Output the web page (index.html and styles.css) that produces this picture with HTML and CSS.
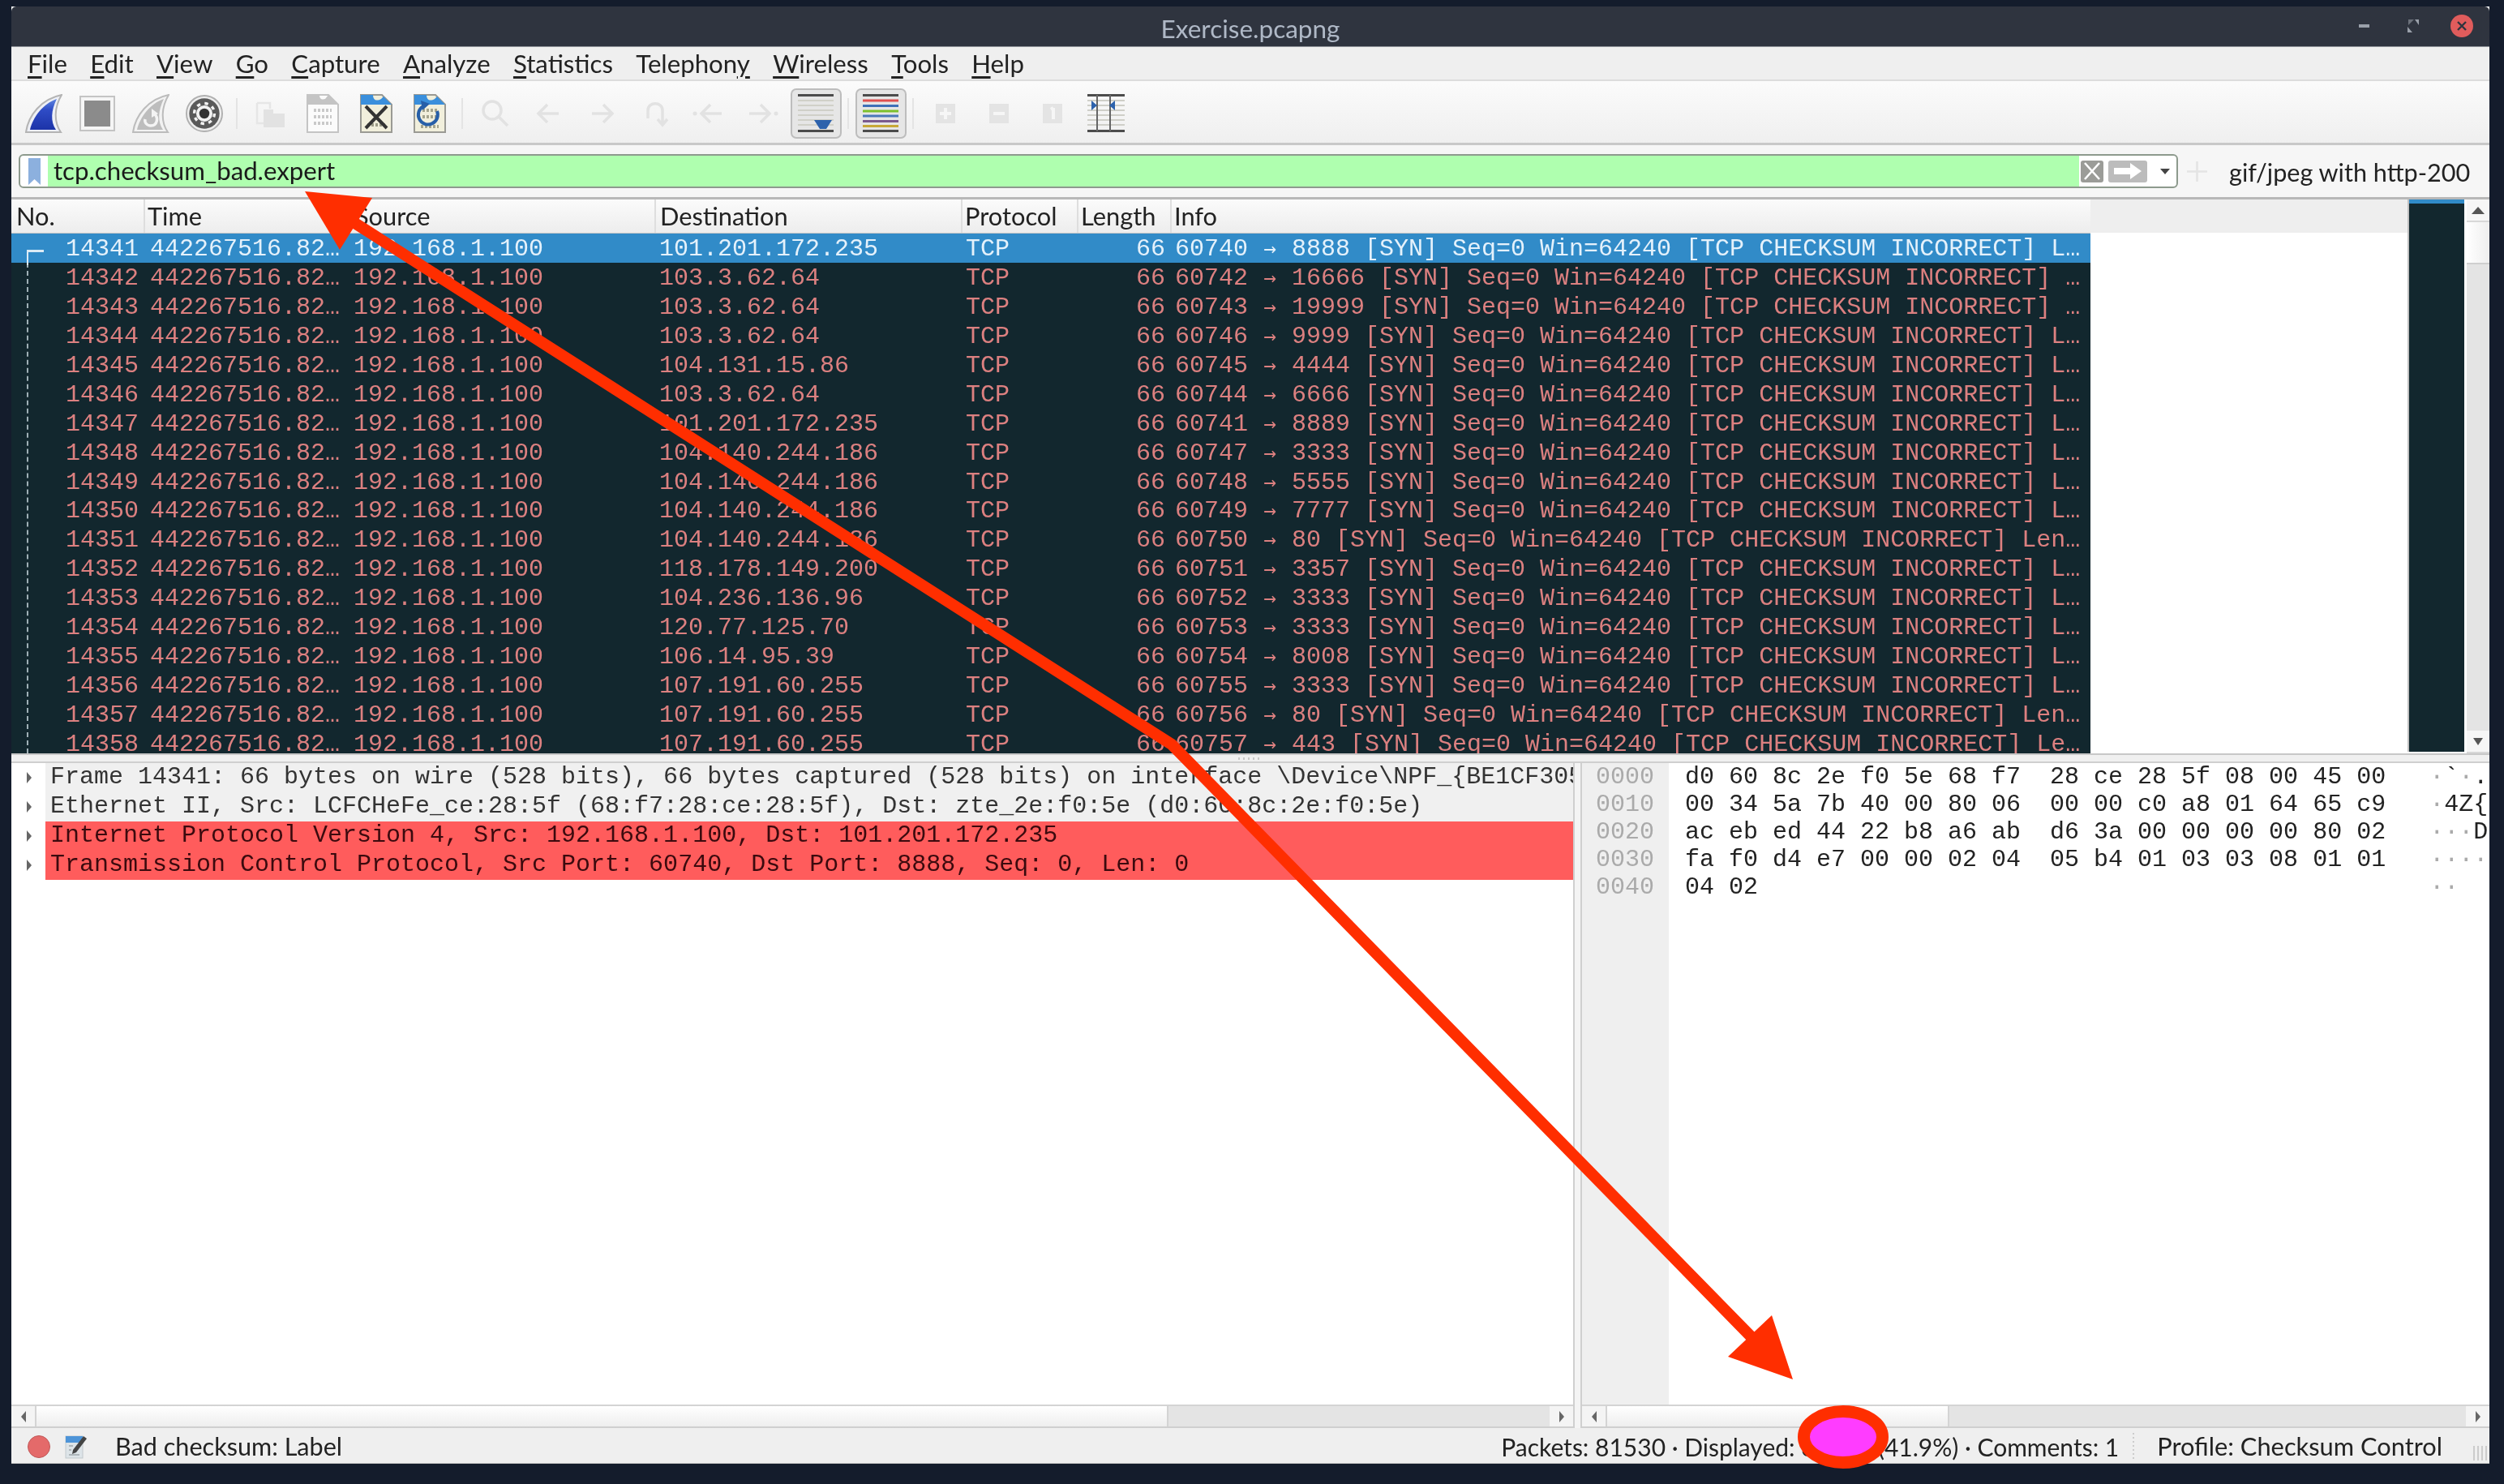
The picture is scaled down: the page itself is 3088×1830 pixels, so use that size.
FILE: index.html
```html
<!DOCTYPE html>
<html lang="en">
<head>
<meta charset="utf-8">
<title>Exercise.pcapng</title>
<link rel="stylesheet" href="styles.css">
</head>
<body>
<div class="window">
  <header class="titlebar">
    <span class="title">Exercise.pcapng</span>
    <div class="wm">
      <span class="wm-min"></span>
      <svg class="wm-max" width="14" height="16" viewBox="0 0 14 16"><path d="M9 0H14V7Z" fill="#9aa0aa"/><path d="M0 9V16H6Z" fill="#9aa0aa"/><path d="M1 0H8L1 7Z" fill="#6d727c"/></svg>
      <svg class="wm-close" width="28" height="28" viewBox="0 0 28 28"><circle cx="14" cy="14" r="14" fill="#e05c5c"/><path d="M9 9L19 19M19 9L9 19" stroke="#2f343f" stroke-width="2.4"/></svg>
    </div>
  </header>

  <nav class="menubar">
    <span><u>F</u>ile</span><span><u>E</u>dit</span><span><u>V</u>iew</span><span><u>G</u>o</span><span><u>C</u>apture</span><span><u>A</u>nalyze</span><span><u>S</u>tatistics</span><span>Telephon<u>y</u></span><span><u>W</u>ireless</span><span><u>T</u>ools</span><span><u>H</u>elp</span>
  </nav>

  <div class="toolbar">
    <div class="tool"><svg class="icon" viewBox="0 0 46 48"><defs><linearGradient id="fin" x1="0" y1="0" x2="0" y2="1"><stop offset="0" stop-color="#5f86e0"/><stop offset=".35" stop-color="#2f4cc6"/><stop offset="1" stop-color="#1c33a8"/></linearGradient></defs><path d="M1 47C4 26 20 6 45 1C36 16 35 34 44 47Z" fill="#eef0f6" stroke="#b4b4b4" stroke-width="2"/><path d="M6 44C10 28 22 12 39 6C32 20 31 34 38 44Z" fill="url(#fin)"/></svg></div>
    <div class="tool"><svg class="icon" viewBox="0 0 46 48"><rect x="2" y="3" width="42" height="42" fill="#f5f5f5" stroke="#c4c4c4" stroke-width="2"/><rect x="7" y="8" width="32" height="32" fill="#8b8b8b"/></svg></div>
    <div class="tool"><svg class="icon" viewBox="0 0 46 48"><path d="M1 47C4 26 20 6 45 1C36 16 35 34 44 47Z" fill="#f2f2f2" stroke="#bcbcbc" stroke-width="2"/><path d="M6 44C10 28 22 12 39 6C32 20 31 34 38 44Z" fill="#bdbdbd"/><path d="M27 24C33 29 31 39 23 39C18 39 15 35 16 31" fill="none" stroke="#f4f4f4" stroke-width="3.5"/><path d="M24 18L32 24L24 29Z" fill="#f4f4f4"/></svg></div>
    <div class="tool"><svg class="icon" viewBox="0 0 48 48"><circle cx="24" cy="24" r="23" fill="#efefef" stroke="#b0b0b0" stroke-width="2"/><circle cx="24" cy="24" r="19.5" fill="#5a5a5a"/><circle cx="24" cy="24" r="13" fill="none" stroke="#f2f2f2" stroke-width="3.5" stroke-dasharray="4.6 5.6"/><circle cx="24" cy="24" r="10.5" fill="#f2f2f2"/><circle cx="24" cy="24" r="6.5" fill="#333"/></svg></div>
    <i class="tsep"></i>
    <div class="tool"><svg class="icon" viewBox="0 0 46 48"><path d="M8 11H24V18M8 11V36H16" fill="none" stroke="#e6e6e6" stroke-width="2.5"/><rect x="16" y="24" width="26" height="17" fill="#e2e2e2"/><rect x="16" y="19" width="12" height="6" fill="#e2e2e2"/></svg></div>
    <div class="tool"><svg class="icon" viewBox="0 0 42 48"><path d="M2 1H28L40 13V47H2Z" fill="#fbfbfb" stroke="#c4c4c4" stroke-width="2"/><path d="M2 1H17C17 7 21 7 24 6L28 1L40 13H2Z" fill="#c4c4c4"/><path d="M10 20H32M10 28H32M10 36H32" stroke="#c9c9c9" stroke-width="4" stroke-dasharray="3 2"/></svg></div>
    <div class="tool"><svg class="icon" viewBox="0 0 42 48"><path d="M2 1H28L40 13V47H2Z" fill="#f1efdc" stroke="#9a9a94" stroke-width="2"/><path d="M2 1H17C17 8 22 9 27 6L30 3L40 13H2Z" fill="#3a8fdc"/><path d="M10 38H32" stroke="#9c9c88" stroke-width="4" stroke-dasharray="3 2"/><path d="M8 15L34 42M34 15L8 42" stroke="#333" stroke-width="4"/></svg></div>
    <div class="tool"><svg class="icon" viewBox="0 0 42 48"><path d="M2 1H28L40 13V47H2Z" fill="#f1efdc" stroke="#9a9a94" stroke-width="2"/><path d="M2 1H17C17 8 22 9 27 6L30 3L40 13H2Z" fill="#3a8fdc"/><path d="M12 20H30M12 28H30M10 40H32" stroke="#a4a48e" stroke-width="4" stroke-dasharray="3 2"/><path d="M30 21A12 12 0 1 1 13 15" fill="none" stroke="#275fa8" stroke-width="4"/><path d="M10 8L21 12L12 20Z" fill="#275fa8"/></svg></div>
    <i class="tsep"></i>
    <div class="tool"><svg class="icon dis" viewBox="0 0 46 48"><circle cx="20" cy="20" r="11" fill="none"/><path d="M28 28L39 39"/></svg></div>
    <div class="tool"><svg class="icon dis" viewBox="0 0 46 48"><path d="M36 24H12M22 13L11 24L22 35"/></svg></div>
    <div class="tool"><svg class="icon dis" viewBox="0 0 46 48"><path d="M11 24H35M25 13L36 24L25 35"/></svg></div>
    <div class="tool"><svg class="icon dis" viewBox="0 0 46 48"><path d="M14 30V20C14 9 32 9 32 20V37M26 31L32 38L38 31"/></svg></div>
    <div class="tool"><svg class="icon dis" viewBox="0 0 46 48"><path d="M39 24H15M25 13L14 24L25 35"/><circle cx="6" cy="24" r="2.5"/></svg></div>
    <div class="tool"><svg class="icon dis" viewBox="0 0 46 48"><path d="M7 24H31M21 13L32 24L21 35"/><circle cx="40" cy="24" r="2.5"/></svg></div>
    <div class="tool"><div class="toggled"><svg class="icon" viewBox="0 0 46 48"><path d="M1 1.500H45M1 45.500H45" stroke="#4c4c4c" stroke-width="3"/><path d="M1 8H45M1 14H45M1 20H45M1 26H45M1 32H45M1 38H45" stroke="#d0d0c8" stroke-width="2"/><path d="M21 32H43L36 43H28Z" fill="#2d62ac"/></svg></div></div>
    <i class="tsep"></i>
    <div class="tool"><div class="toggled"><svg class="icon" viewBox="0 0 46 48"><path d="M1 1.500H45M1 45.500H45" stroke="#4c4c4c" stroke-width="3"/><path d="M1 8H45" stroke="#e05050" stroke-width="3"/><path d="M1 14.500H45" stroke="#3f70b8" stroke-width="3"/><path d="M1 21H45" stroke="#7cc02c" stroke-width="3"/><path d="M1 27H45" stroke="#4a78ba" stroke-width="3"/><path d="M1 33.500H45" stroke="#7a5a8e" stroke-width="3"/><path d="M1 39.500H45" stroke="#c8a838" stroke-width="3"/></svg></div></div>
    <i class="tsep"></i>
    <div class="tool"><svg class="icon dim" viewBox="0 0 46 48"><rect x="11" y="12" width="24" height="24"/><path d="M23 17V31M16 24H30" class="cut"/></svg></div>
    <div class="tool"><svg class="icon dim" viewBox="0 0 46 48"><rect x="11" y="12" width="24" height="24"/><path d="M16 24H30" class="cut"/></svg></div>
    <div class="tool"><svg class="icon dim" viewBox="0 0 46 48"><rect x="11" y="12" width="24" height="24"/><path d="M24 17V31M24 17L21 19" class="cut"/></svg></div>
    <div class="tool"><svg class="icon" viewBox="0 0 46 48"><path d="M0 8H46M0 14H46M0 20H46M0 26H46M0 32H46M0 38H46" stroke="#cfcfc8" stroke-width="2"/><path d="M0 1.500H46M0 45.500H46" stroke="#4c4c4c" stroke-width="3"/><path d="M12 1V46M28 1V46" stroke="#666" stroke-width="2"/><path d="M5 8L12 14L5 20ZM34 8L27 14L34 20Z" fill="#2d62ac"/></svg></div>
  </div>

  <div class="filterbar">
    <div class="filter">
      <span class="bookmark"><svg width="15" height="33" viewBox="0 0 15 33"><path d="M0 0H15V33L7.500 26L0 33Z" fill="#8cb0de"/></svg></span>
      <span class="filter-text">tcp.checksum_bad.expert</span>
      <span class="filter-clear"><svg width="20" height="22" viewBox="0 0 20 22"><path d="M1 1L19 21M19 1L1 21" stroke="#fff" stroke-width="2.600"/></svg></span>
      <span class="filter-apply"><svg width="34" height="20" viewBox="0 0 34 20"><path d="M0 6H20V0L34 10L20 20V14H0Z" fill="#fff"/></svg></span>
      <span class="filter-drop"></span>
    </div>
    <svg class="filter-plus" width="25" height="25" viewBox="0 0 25 25"><path d="M12.500 0V25M0 12.500H25" stroke="#e4e4e4" stroke-width="2.500"/></svg>
    <span class="filter-label">gif/jpeg with http-200</span>
  </div>

  <section class="packets">
    <div class="list">
      <div class="cols head">
        <span>No.</span><span>Time</span><span>Source</span><span>Destination</span><span>Protocol</span><span>Length</span><span>Info</span>
      </div>
      <div class="rows">
        <div class="cols row sel"><span>14341</span><span>442267516.82…</span><span>192.168.1.100</span><span>101.201.172.235</span><span>TCP</span><span>66</span><span>60740 <em>→</em> 8888 [SYN] Seq=0 Win=64240 [TCP CHECKSUM INCORRECT] L…</span></div>
        <div class="cols row"><span>14342</span><span>442267516.82…</span><span>192.168.1.100</span><span>103.3.62.64</span><span>TCP</span><span>66</span><span>60742 <em>→</em> 16666 [SYN] Seq=0 Win=64240 [TCP CHECKSUM INCORRECT] …</span></div>
        <div class="cols row"><span>14343</span><span>442267516.82…</span><span>192.168.1.100</span><span>103.3.62.64</span><span>TCP</span><span>66</span><span>60743 <em>→</em> 19999 [SYN] Seq=0 Win=64240 [TCP CHECKSUM INCORRECT] …</span></div>
        <div class="cols row"><span>14344</span><span>442267516.82…</span><span>192.168.1.100</span><span>103.3.62.64</span><span>TCP</span><span>66</span><span>60746 <em>→</em> 9999 [SYN] Seq=0 Win=64240 [TCP CHECKSUM INCORRECT] L…</span></div>
        <div class="cols row"><span>14345</span><span>442267516.82…</span><span>192.168.1.100</span><span>104.131.15.86</span><span>TCP</span><span>66</span><span>60745 <em>→</em> 4444 [SYN] Seq=0 Win=64240 [TCP CHECKSUM INCORRECT] L…</span></div>
        <div class="cols row"><span>14346</span><span>442267516.82…</span><span>192.168.1.100</span><span>103.3.62.64</span><span>TCP</span><span>66</span><span>60744 <em>→</em> 6666 [SYN] Seq=0 Win=64240 [TCP CHECKSUM INCORRECT] L…</span></div>
        <div class="cols row"><span>14347</span><span>442267516.82…</span><span>192.168.1.100</span><span>101.201.172.235</span><span>TCP</span><span>66</span><span>60741 <em>→</em> 8889 [SYN] Seq=0 Win=64240 [TCP CHECKSUM INCORRECT] L…</span></div>
        <div class="cols row"><span>14348</span><span>442267516.82…</span><span>192.168.1.100</span><span>104.140.244.186</span><span>TCP</span><span>66</span><span>60747 <em>→</em> 3333 [SYN] Seq=0 Win=64240 [TCP CHECKSUM INCORRECT] L…</span></div>
        <div class="cols row"><span>14349</span><span>442267516.82…</span><span>192.168.1.100</span><span>104.140.244.186</span><span>TCP</span><span>66</span><span>60748 <em>→</em> 5555 [SYN] Seq=0 Win=64240 [TCP CHECKSUM INCORRECT] L…</span></div>
        <div class="cols row"><span>14350</span><span>442267516.82…</span><span>192.168.1.100</span><span>104.140.244.186</span><span>TCP</span><span>66</span><span>60749 <em>→</em> 7777 [SYN] Seq=0 Win=64240 [TCP CHECKSUM INCORRECT] L…</span></div>
        <div class="cols row"><span>14351</span><span>442267516.82…</span><span>192.168.1.100</span><span>104.140.244.186</span><span>TCP</span><span>66</span><span>60750 <em>→</em> 80 [SYN] Seq=0 Win=64240 [TCP CHECKSUM INCORRECT] Len…</span></div>
        <div class="cols row"><span>14352</span><span>442267516.82…</span><span>192.168.1.100</span><span>118.178.149.200</span><span>TCP</span><span>66</span><span>60751 <em>→</em> 3357 [SYN] Seq=0 Win=64240 [TCP CHECKSUM INCORRECT] L…</span></div>
        <div class="cols row"><span>14353</span><span>442267516.82…</span><span>192.168.1.100</span><span>104.236.136.96</span><span>TCP</span><span>66</span><span>60752 <em>→</em> 3333 [SYN] Seq=0 Win=64240 [TCP CHECKSUM INCORRECT] L…</span></div>
        <div class="cols row"><span>14354</span><span>442267516.82…</span><span>192.168.1.100</span><span>120.77.125.70</span><span>TCP</span><span>66</span><span>60753 <em>→</em> 3333 [SYN] Seq=0 Win=64240 [TCP CHECKSUM INCORRECT] L…</span></div>
        <div class="cols row"><span>14355</span><span>442267516.82…</span><span>192.168.1.100</span><span>106.14.95.39</span><span>TCP</span><span>66</span><span>60754 <em>→</em> 8008 [SYN] Seq=0 Win=64240 [TCP CHECKSUM INCORRECT] L…</span></div>
        <div class="cols row"><span>14356</span><span>442267516.82…</span><span>192.168.1.100</span><span>107.191.60.255</span><span>TCP</span><span>66</span><span>60755 <em>→</em> 3333 [SYN] Seq=0 Win=64240 [TCP CHECKSUM INCORRECT] L…</span></div>
        <div class="cols row"><span>14357</span><span>442267516.82…</span><span>192.168.1.100</span><span>107.191.60.255</span><span>TCP</span><span>66</span><span>60756 <em>→</em> 80 [SYN] Seq=0 Win=64240 [TCP CHECKSUM INCORRECT] Len…</span></div>
        <div class="cols row"><span>14358</span><span>442267516.82…</span><span>192.168.1.100</span><span>107.191.60.255</span><span>TCP</span><span>66</span><span>60757 <em>→</em> 443 [SYN] Seq=0 Win=64240 [TCP CHECKSUM INCORRECT] Le…</span></div>
        <div class="tree"></div>
      </div>
    </div>
    <div class="blank"><div class="blank-head"></div></div>
    <div class="minimap"><div class="minimap-sel"></div></div>
    <div class="vscroll">
      <div class="sbtn"><i class="tri up"></i></div>
      <div class="vthumb"></div>
      <div class="track"></div>
      <div class="sbtn"><i class="tri down"></i></div>
    </div>
  </section>

  <div class="hsash"><i></i></div>

  <section class="panes">
    <div class="details">
      <div class="tree-rows">
        <div class="drow grey"><i class="tri right"></i><span>Frame 14341: 66 bytes on wire (528 bits), 66 bytes captured (528 bits) on interface \Device\NPF_{BE1CF305-0000-0000}</span></div>
        <div class="drow grey"><i class="tri right"></i><span>Ethernet II, Src: LCFCHeFe_ce:28:5f (68:f7:28:ce:28:5f), Dst: zte_2e:f0:5e (d0:60:8c:2e:f0:5e)</span></div>
        <div class="drow red"><i class="tri right"></i><span>Internet Protocol Version 4, Src: 192.168.1.100, Dst: 101.201.172.235</span></div>
        <div class="drow red"><i class="tri right"></i><span>Transmission Control Protocol, Src Port: 60740, Dst Port: 8888, Seq: 0, Len: 0</span></div>
      </div>
      <div class="hscroll">
        <div class="sbtn-h"><i class="tri left"></i></div>
        <div class="hthumb thumb-a"></div>
        <div class="track"></div>
        <div class="sbtn-h"><i class="tri right"></i></div>
      </div>
    </div>
    <div class="vsash"></div>
    <div class="bytes">
      <div class="hex">
        <div class="offsets"><div>0000</div><div>0010</div><div>0020</div><div>0030</div><div>0040</div></div>
        <div class="dump">
          <div class="line">d0 60 8c 2e f0 5e 68 f7  28 ce 28 5f 08 00 45 00   <b>·</b>`<b>·</b>.</div>
          <div class="line">00 34 5a 7b 40 00 80 06  00 00 c0 a8 01 64 65 c9   <b>·</b>4Z{</div>
          <div class="line">ac eb ed 44 22 b8 a6 ab  d6 3a 00 00 00 00 80 02   <b>···</b>D</div>
          <div class="line">fa f0 d4 e7 00 00 02 04  05 b4 01 03 03 08 01 01   <b>····</b></div>
          <div class="line">04 02                                              <b>··</b></div>
        </div>
      </div>
      <div class="hscroll">
        <div class="sbtn-h"><i class="tri left"></i></div>
        <div class="hthumb thumb-b"></div>
        <div class="track"></div>
        <div class="sbtn-h"><i class="tri right"></i></div>
      </div>
    </div>
  </section>

  <footer class="statusbar">
    <span class="ball"></span>
    <svg class="note" width="28" height="30" viewBox="0 0 28 30"><rect x="1" y="2" width="21" height="27" fill="#dde4e8" stroke="#c2c9cd"/><rect x="1" y="2" width="21" height="8" fill="#4d94d8"/><path d="M10 19L23 2L27 5L14 22L9 24Z" fill="#444"/><path d="M5 14H10M5 19H8M5 25H18" stroke="#aeb6ba" stroke-width="2"/></svg>
    <span class="status-msg">Bad checksum: Label</span>
    <span class="status-stats">Packets: 81530 · Displayed: 34160 (41.9%) · Comments: 1</span>
    <i class="status-sep"></i>
    <span class="status-profile">Profile: Checksum Control</span>
    <i class="grip"></i>
  </footer>
</div>

<svg class="annot" width="3088" height="1830" viewBox="0 0 3088 1830">
  <path d="M425 267L1445 918L2165 1654" fill="none" stroke="#ff2e00" stroke-width="14" stroke-linejoin="round"/>
  <path d="M376 236L459 244L419 308Z" fill="#ff2e00"/>
  <path d="M2211 1701L2185 1622L2131 1673Z" fill="#ff2e00"/>
  <ellipse cx="2273" cy="1772" rx="48.500" ry="31.500" fill="#ff3cff" stroke="#ff2e00" stroke-width="15"/>
</svg>
</body>
</html>
```
FILE: styles.css
```css
* { box-sizing: border-box; }
html, body { margin: 0; padding: 0; }
body {
  width: 3088px;
  height: 1830px;
  overflow: hidden;
  position: relative;
  background: #141c2c;
  font-family: "Lato", "Noto Sans", sans-serif;
  font-size: 30.6px;
  color: #222;
}
.window {
  margin: 8px 0 0 14px;
  width: 3056px;
  height: 1797px;
  display: flex;
  flex-direction: column;
  background: #fff;
  filter: blur(0.6px);
}
.titlebar {
  flex: 0 0 50px;
  background: #2f343f;
  border-bottom: 1px solid #8f939a;
  border-radius: 6px 6px 0 0;
  position: relative;
  display: flex;
  align-items: center;
  justify-content: center;
}
.title { color: #afb8c6; font-size: 31.5px; position: relative; top: 2px; }
.wm {
  position: absolute;
  right: 20px;
  top: 10px;
  display: flex;
  align-items: center;
  height: 28px;
}
.wm-min { width: 13px; height: 4px; background: #9aa0aa; margin-right: 47px; }
.wm-max { margin-right: 39px; }

.menubar {
  flex: 0 0 42px;
  background: #efefef;
  border-bottom: 2px solid #dcdcdc;
  display: flex;
  align-items: center;
  gap: 28.3px;
  padding-left: 20px;
  font-size: 31.2px;
  color: #222;
}
.menubar u { text-decoration-thickness: 3px; text-underline-offset: 4px; }

.toolbar {
  flex: 0 0 79px;
  background: linear-gradient(#fbfbfb, #efefef);
  border-bottom: 3px solid #c8c8c8;
  display: flex;
  align-items: center;
  padding: 3px 0 0 7px;
}
.tool {
  width: 66px;
  height: 62px;
  flex: none;
  display: flex;
  align-items: center;
  justify-content: center;
}
.icon { width: 46px; height: 48px; display: block; }
.icon.dis { fill: none; stroke: #e2e2e2; stroke-width: 3.5; }
.icon.dis circle:last-child { fill: #e2e2e2; stroke: none; }
.icon.dis circle:first-child { fill: none; stroke: #e2e2e2; }
.icon.dim rect { fill: #e4e4e4; }
.icon.dim .cut { fill: none; stroke: #f6f6f6; stroke-width: 4; }
.tsep { flex: none; width: 14px; height: 38px; background: linear-gradient(#e4e4e4, #e4e4e4) center / 2px 100% no-repeat; }
.toggled {
  width: 63px;
  height: 62px;
  border: 2px solid #bdbdbd;
  border-radius: 7px;
  background: #e6e6e6;
  display: flex;
  align-items: center;
  justify-content: center;
}

.filterbar {
  flex: 0 0 64px;
  background: #f6f6f6;
  display: flex;
  align-items: center;
  padding: 0 0 0 9px;
  position: relative;
}
.filter {
  width: 2663px;
  height: 42px;
  border: 2px solid #8d9a8d;
  border-radius: 6px;
  background: #fff;
  display: flex;
  align-items: center;
}
.bookmark { flex: 0 0 34px; display: flex; justify-content: center; }
.filter-text {
  flex: 0 0 2505px;
  height: 100%;
  background: #afffaf;
  padding-left: 7px;
  line-height: 37px;
  font-size: 31.2px;
  color: #1a1a1a;
}
.filter-clear {
  margin-left: 2px;
  width: 28px;
  height: 27px;
  background: #9b9c98;
  border-radius: 3px;
  display: flex;
  align-items: center;
  justify-content: center;
}
.filter-apply {
  margin-left: 6px;
  width: 48px;
  height: 27px;
  background: #bcbcbc;
  border-radius: 3px;
  display: flex;
  align-items: center;
  justify-content: center;
}
.filter-drop {
  margin-left: 16px;
  width: 0;
  height: 0;
  border: 6px solid transparent;
  border-top: 7px solid #444;
  border-bottom: 0;
}
.filter-plus { margin-left: 11px; flex: none; }
.filter-label { margin: 3px 0 0 27px; color: #222; }

.packets {
  flex: 0 0 686px;
  border-top: 3px solid #b8b8b8;
  display: flex;
  overflow: hidden;
  background: #fff;
}
.list { flex: 0 0 2564px; display: flex; flex-direction: column; }
.cols {
  display: grid;
  grid-template-columns: 163px 251px 379px 378px 143px 115px 1135px;
}
.head {
  height: 42px;
  flex: none;
  background: linear-gradient(#fbfbfb, #ededed);
  border-bottom: 1px solid #c8c8c8;
  line-height: 41px;
  font-size: 30.8px;
}
.head span { padding-left: 3px; border-left: 2px solid #dedede; color: #222; }
.head span:first-child { border-left: 0; padding-left: 6px; }
.head span:nth-child(3) { padding-left: 8px; }
.head span:nth-child(4) { padding-left: 5px; }
.rows {
  position: relative;
  flex: 1;
  overflow: hidden;
  background: #12272e;
  font-family: "Liberation Mono", monospace;
  font-size: 30px;
}
.row {
  height: 35.95px;
  line-height: 39px;
  color: #dc8080;
  white-space: pre;
}
.row span { padding-left: 8px; overflow: hidden; }
.row span:nth-child(4), .row span:nth-child(5), .row span:nth-child(7) { padding-left: 6px; }
.row span:first-child, .row span:nth-child(6) { text-align: right; padding: 0 6px 0 0; }
.row em {
  font-family: "DejaVu Sans Mono", monospace;
  font-style: normal;
  font-size: 26px;
  display: inline-block;
  width: 18px;
  text-align: center;
  line-height: 1;
}
.row.sel { background: #318bc8; color: #e4f1fb; }
.tree {
  position: absolute;
  left: 19px;
  top: 36px;
  bottom: 0;
  width: 2px;
  border-left: 2px dashed #9fb0b6;
  z-index: 1;
}
.tree::before {
  content: "";
  position: absolute;
  left: -2px;
  top: -16px;
  width: 19px;
  height: 16px;
  border-top: 3px solid #dcebf5;
  border-left: 2px solid #dcebf5;
}
.blank { flex: 0 0 391px; background: #fff; }
.blank-head { height: 41px; background: #eeeeee; }
.minimap {
  flex: 0 0 70px;
  background: #12272e;
  border-left: 2px solid #c0c0c0;
  margin-bottom: 2px;
}
.minimap-sel { height: 5px; background: #318bc8; }
.vscroll {
  flex: 0 0 31px;
  display: flex;
  flex-direction: column;
  border-left: 3px solid #fff;
  background: #e4e4e4;
}
.sbtn {
  height: 28px;
  flex: none;
  background: #f6f6f6;
  display: flex;
  align-items: center;
  justify-content: center;
  border-bottom: 2px solid #d8d8d8;
}
.vthumb { height: 52px; flex: none; background: linear-gradient(90deg, #fff, #eee); border-bottom: 2px solid #cfcfcf; }
.track { flex: 1; background: #e4e4e4; }
.tri { display: block; width: 0; height: 0; border: 7px solid transparent; flex: none; }
.tri.up { border-bottom: 9px solid #555; border-top: 0; border-left-width: 8px; border-right-width: 8px; }
.tri.down { border-top: 9px solid #555; border-bottom: 0; border-left-width: 6px; border-right-width: 6px; }
.tri.right { border-left: 6px solid #666; border-right: 0; }
.tri.left { border-right: 6px solid #666; border-left: 0; }

.hsash {
  flex: 0 0 12px;
  background: #f0f0f0;
  border-bottom: 2px solid #cfcfcf;
  border-top: 2px solid #c8c8c8;
  display: flex;
  justify-content: center;
}
.hsash i { width: 30px; height: 3px; margin-top: 3px; background: repeating-linear-gradient(90deg, #c8c8c8 0 2px, transparent 2px 6px); }

.panes { flex: 1; display: flex; min-height: 0; }
.details { flex: 0 0 1926px; display: flex; flex-direction: column; min-width: 0; }
.tree-rows { flex: 1; font-family: "Liberation Mono", monospace; font-size: 30px; overflow: hidden; background: #fff; }
.drow {
  height: 36px;
  display: flex;
  align-items: center;
  white-space: pre;
  padding-left: 19px;
}
.drow span {
  margin-left: 17px;
  height: 36px;
  padding-left: 6px;
  flex: 1;
  overflow: hidden;
  color: #333;
  line-height: 35px;
}
.drow.grey span { background: #f0f0f0; }
.drow.red span { background: #ff5c5c; color: #3b0a0e; }
.hscroll {
  flex: 0 0 29px;
  display: flex;
  background: #e4e4e4;
  border-top: 2px solid #d4d4d4;
  border-bottom: 2px solid #cfcfcf;
}
.sbtn-h {
  flex: 0 0 29px;
  background: #f4f4f4;
  display: flex;
  align-items: center;
  justify-content: center;
}
.hthumb { flex: none; background: linear-gradient(#fff, #eee); border-left: 2px solid #d4d4d4; border-right: 2px solid #d4d4d4; }
.thumb-a { width: 1398px; }
.thumb-b { width: 424px; }

.vsash { flex: 0 0 11px; background: #f4f4f4; border-left: 2px solid #cfcfcf; border-right: 2px solid #cfcfcf; }
.bytes { flex: 1; display: flex; flex-direction: column; min-width: 0; }
.hex {
  flex: 1;
  display: flex;
  font-family: "Liberation Mono", monospace;
  font-size: 30px;
  line-height: 34px;
  overflow: hidden;
  background: #fff;
}
.offsets { flex: 0 0 107px; background: #efefef; color: #aaa; padding-left: 17px; }
.dump { padding-left: 20px; color: #222; flex: 1; min-width: 0; }
.line { white-space: pre; }
.dump b { font-weight: 400; color: #aaa; }

.statusbar {
  flex: 0 0 44px;
  background: #efefef;
  border-bottom: 1px solid #c8c8c8;
  display: flex;
  align-items: center;
  position: relative;
  padding-top: 2px;
}
.ball {
  width: 28px;
  height: 28px;
  margin-left: 20px;
  border-radius: 50%;
  background: #e46a6a;
  border: 1px solid #c05858;
  flex: none;
}
.note { margin-left: 18px; flex: none; }
.status-msg { margin-left: 34px; }
.status-stats { margin-left: auto; font-size: 30px; }
.status-sep { width: 2px; height: 34px; margin: 0 28px 0 17px; background: repeating-linear-gradient(#ccc 0 2px, transparent 2px 5px); }
.status-profile { margin-right: 58px; font-size: 30.8px; }
.grip { position: absolute; right: 2px; bottom: 3px; width: 18px; height: 18px; background: repeating-linear-gradient(90deg, #ccc 0 2px, transparent 2px 5px); }

.annot { position: absolute; left: 0; top: 0; pointer-events: none; }
```
